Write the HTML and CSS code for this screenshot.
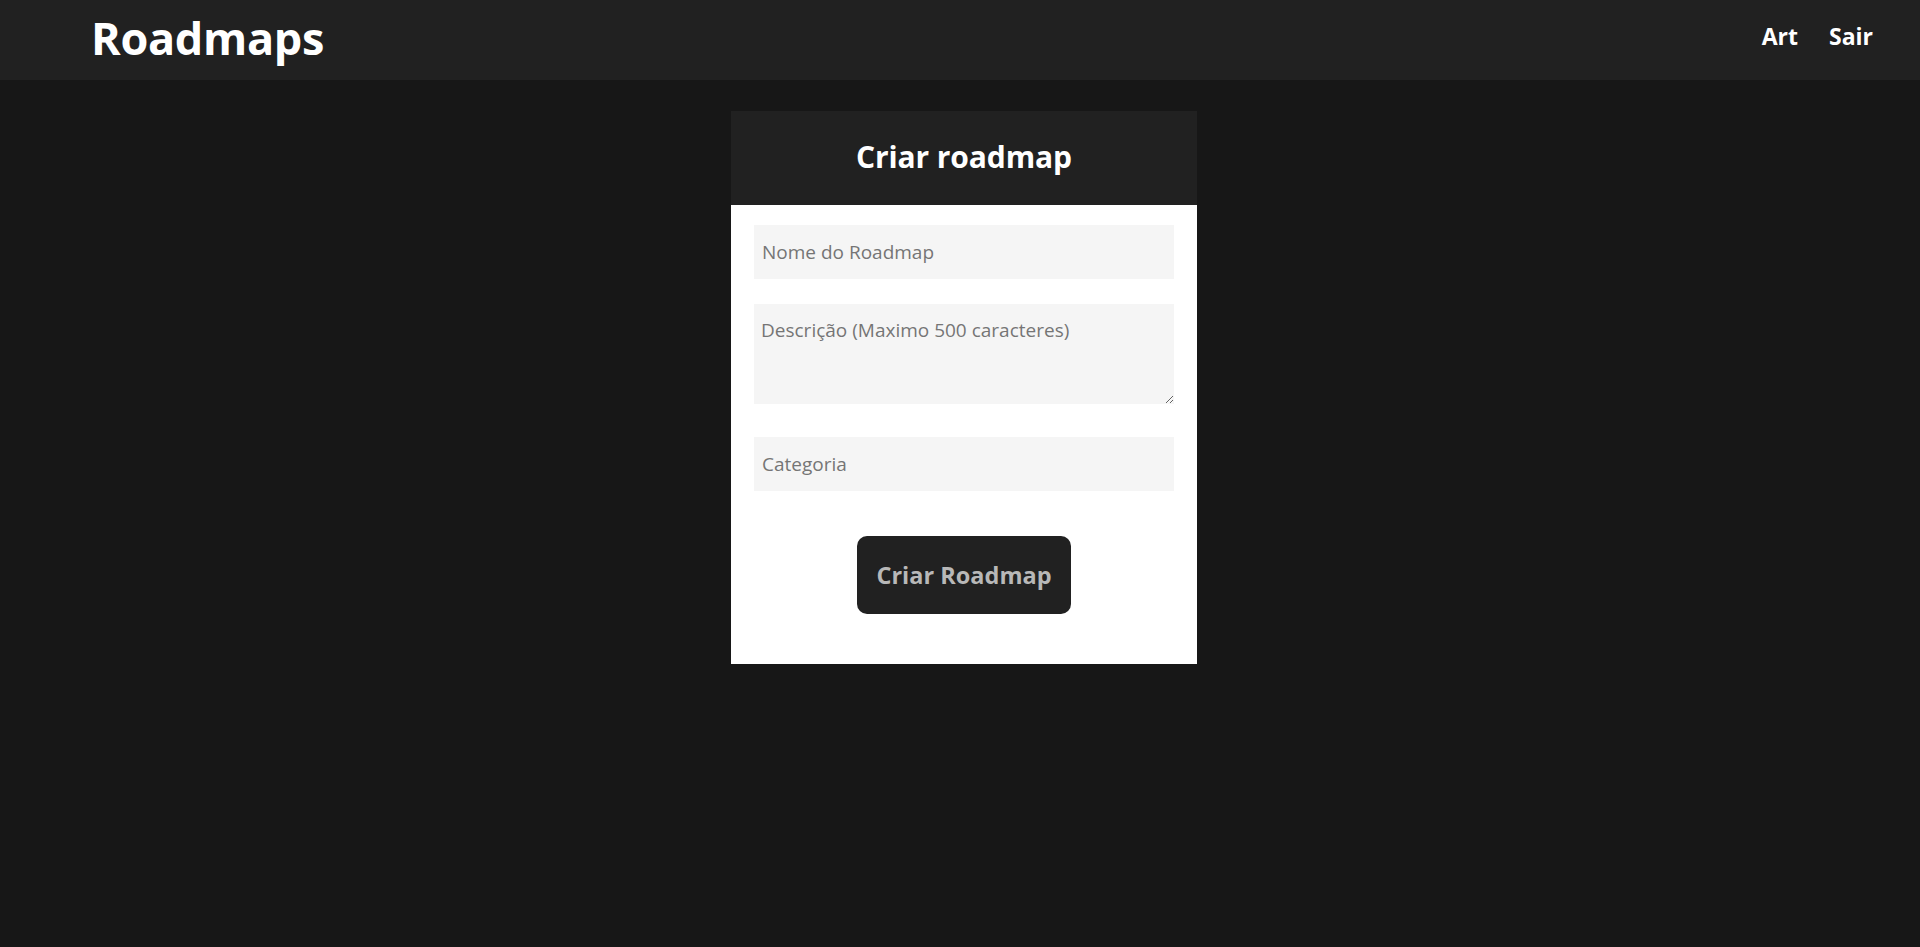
FILE: index.html
```html
<!DOCTYPE html>
<html lang="pt">
<head>
<meta charset="utf-8">
<title>Roadmaps</title>
<link rel="stylesheet" href="styles.css">
</head>
<body>
<header class="topbar">
  <h1 class="logo">Roadmaps</h1>
  <nav class="nav">
    <a class="nav-link" href="#">Art</a>
    <a class="nav-link" href="#">Sair</a>
  </nav>
</header>
<main class="main">
  <section class="card">
    <div class="card-head">
      <h2 class="card-title">Criar roadmap</h2>
    </div>
    <form class="card-body">
      <input class="field field-input" type="text" placeholder="Nome do Roadmap">
      <textarea class="field field-area" placeholder="Descrição (Maximo 500 caracteres)"></textarea>
      <input class="field field-input field-cat" type="text" placeholder="Categoria">
      <button class="submit" type="button">Criar Roadmap</button>
    </form>
  </section>
</main>
</body>
</html>
```

FILE: styles.css
```css
* { box-sizing: border-box; }
html, body { margin: 0; padding: 0; }
body {
  background: #171717;
  font-family: "Open Sans", "Noto Sans", sans-serif;
  color: #fff;
  min-height: 947px;
}
.topbar {
  height: 80px;
  background: #212121;
  display: flex;
  align-items: center;
  justify-content: space-between;
  padding: 0 47px 0 91px;
}
.logo {
  margin: 0;
  font-size: 45px;
  font-weight: 700;
  line-height: 1;
  letter-spacing: -0.3px;
  position: relative;
  top: -3px;
}
.nav {
  display: flex;
  gap: 31px;
  position: relative;
  top: -4px;
}
.nav-link {
  color: #fff;
  text-decoration: none;
  font-weight: 700;
  font-size: 23px;
}
.main {
  display: flex;
  justify-content: center;
  padding-top: 31px;
  padding-left: 8px;
}
.card {
  width: 466px;
  background: #fff;
}
.card-head {
  height: 94px;
  background: #212121;
  display: flex;
  align-items: center;
  justify-content: center;
  padding-bottom: 4px;
}
.card-title {
  margin: 0;
  font-size: 30px;
  font-weight: 700;
  color: #fff;
  letter-spacing: -0.1px;
}
.card-body {
  display: flex;
  flex-direction: column;
  padding: 20px 23px 50px;
  margin: 0;
}
.field {
  display: block;
  width: 100%;
  border: none;
  outline: none;
  background: #f5f5f5;
  font-family: "Open Sans", "Noto Sans", sans-serif;
  font-size: 19px;
  color: #333;
  padding: 0 8px;
  margin: 0;
}
.field::placeholder { color: #757575; opacity: 1; }
.field-input { height: 54px; }
.field-area {
  height: 100px;
  margin-top: 25px;
  padding: 13px 7px;
  resize: vertical;
}
.field-cat { margin-top: 33px; }
.submit {
  align-self: center;
  margin-top: 45px;
  width: 214px;
  height: 78px;
  border: none;
  border-radius: 10px;
  background: #212121;
  color: #b8b8b8;
  font-family: "Open Sans", "Noto Sans", sans-serif;
  font-size: 23.5px;
  font-weight: 700;
  cursor: pointer;
}
```
